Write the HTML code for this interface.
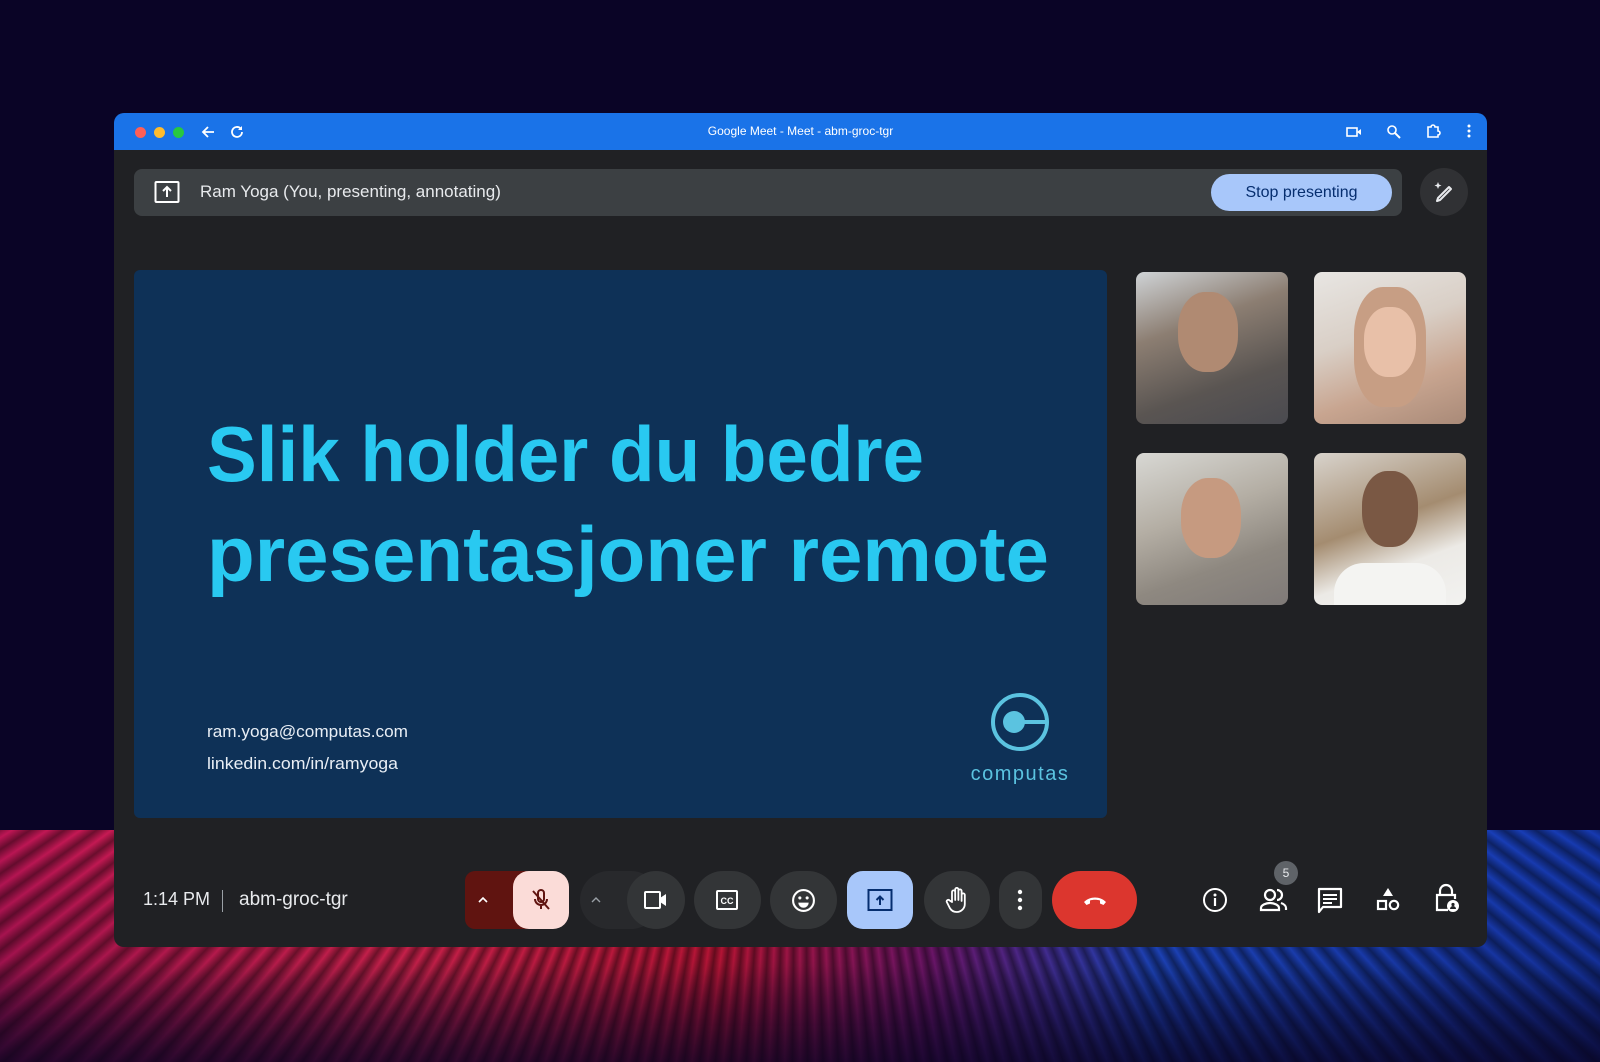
<!DOCTYPE html>
<html><head><meta charset="utf-8"><style>
*{margin:0;padding:0;box-sizing:border-box}
body{width:1600px;height:1062px;overflow:hidden;position:relative;font-family:"Liberation Sans",sans-serif;background:#0a0426}
.floor{position:absolute;left:0;top:830px;width:1600px;height:232px;
background:linear-gradient(90deg,#d0185a 0%,#ff2a55 25%,#e81a3a 45%,#8a1a7a 58%,#2255e0 72%,#1840c0 100%);
-webkit-mask:linear-gradient(180deg,rgba(0,0,0,.9),rgba(0,0,0,.75) 60%,rgba(0,0,0,.35));}
.stripes{position:absolute;left:0;top:830px;width:1600px;height:232px;
background:repeating-conic-gradient(from 90deg at 800px -500px, rgba(0,0,0,0) 0deg, rgba(0,0,0,.45) 0.6deg, rgba(0,0,0,0) 1.2deg);}
.fadeB{position:absolute;left:0;top:960px;width:1600px;height:102px;background:linear-gradient(180deg,rgba(10,4,38,0),rgba(10,4,38,.55))}
.win{position:absolute;left:114px;top:113px;width:1373px;height:834px;background:#202124;border-radius:10px;overflow:hidden}
.tb{position:absolute;left:0;top:0;width:100%;height:37px;background:#1a73e8}
.dot{position:absolute;top:14px;width:11px;height:11px;border-radius:50%}
.ttl{position:absolute;left:0;width:100%;top:11px;text-align:center;color:#fff;font-size:12px}
.pbar{position:absolute;left:20px;top:56px;width:1268px;height:47px;background:#3c4043;border-radius:8px}
.pbar .t{position:absolute;left:66px;top:13px;color:#e8eaed;font-size:17px}
.stop{position:absolute;left:1077px;top:5px;width:181px;height:37px;border-radius:19px;background:#a8c7fa;color:#062e6f;font-size:16px;text-align:center;line-height:37px}
.pen{position:absolute;left:1306px;top:55px;width:48px;height:48px;border-radius:50%;background:#303134}
.slide{position:absolute;left:20px;top:157px;width:973px;height:548px;background:#0e3157;border-radius:6px;overflow:hidden}
.tile{position:absolute;width:152px;height:152px;border-radius:8px}
.btn{position:absolute;top:758px;height:58px;border-radius:29px;background:#333537}
.ic{position:absolute}
</style></head><body>
<div class="floor"></div><div class="stripes"></div><div class="fadeB"></div>
<div class="win">
 <div class="tb">
  <div class="dot" style="left:21px;background:#ff5f57"></div>
  <div class="dot" style="left:40px;background:#febc2e"></div>
  <div class="dot" style="left:59px;background:#28c840"></div>
  <svg class="ic" style="left:86px;top:11px" width="16" height="16" viewBox="0 0 16 16"><path d="M14 8H3M8 3L3 8l5 5" stroke="#fff" stroke-width="1.8" fill="none"/></svg>
  <svg class="ic" style="left:115px;top:11px" width="16" height="16" viewBox="0 0 16 16"><path d="M13 8a5 5 0 1 1-1.5-3.6" stroke="#fff" stroke-width="1.8" fill="none"/><path d="M13 2v4h-4" fill="#fff"/></svg>
  <div class="ttl">Google Meet - Meet - abm-groc-tgr</div>
  <svg class="ic" style="left:1232px;top:11px" width="16" height="16" viewBox="0 0 16 16"><rect x="1" y="4" width="10" height="8" stroke="#fff" stroke-width="1.6" fill="none"/><path d="M11 8l4-3v6z" fill="#fff"/></svg>
  <svg class="ic" style="left:1272px;top:11px" width="16" height="16" viewBox="0 0 16 16"><circle cx="6" cy="6" r="4" stroke="#fff" stroke-width="1.6" fill="none"/><path d="M9 9l5 5" stroke="#fff" stroke-width="2"/></svg>
  <svg class="ic" style="left:1311px;top:10px" width="16" height="16" viewBox="0 0 16 16"><path d="M3 4h3a2 2 0 0 1 4 0h3v4a2 2 0 0 1 0 4v2H3z" stroke="#fff" stroke-width="1.6" fill="none"/></svg>
  <svg class="ic" style="left:1349px;top:10px" width="12" height="16" viewBox="0 0 12 16"><circle cx="6" cy="3" r="1.5" fill="#fff"/><circle cx="6" cy="8" r="1.5" fill="#fff"/><circle cx="6" cy="13" r="1.5" fill="#fff"/></svg>
 </div>
 <div class="pbar">
  <svg class="ic" style="left:20px;top:11px" width="26" height="24" viewBox="0 0 26 24"><rect x="1.5" y="2" width="23" height="20" stroke="#fff" stroke-width="2" fill="none" rx="1"/><path d="M13 17V8M9 11l4-4 4 4" stroke="#fff" stroke-width="2" fill="none"/></svg>
  <div class="t">Ram Yoga (You, presenting, annotating)</div>
  <div class="stop">Stop presenting</div>
 </div>
 <div class="pen"><svg class="ic" style="left:12px;top:12px" width="24" height="24" viewBox="0 0 24 24"><path d="M8 20l-3 1 1-3L17 7l2 2z" stroke="#e8eaed" stroke-width="2" fill="none" stroke-linejoin="round"/><path d="M6 2l1 2.5L9.5 5.5 7 6.5 6 9 5 6.5 2.5 5.5 5 4.5z" fill="#e8eaed"/></svg></div>
 <div class="slide">
  <svg width="973" height="548" style="position:absolute;left:0;top:0">
   <text x="73" y="211" textLength="717" lengthAdjust="spacingAndGlyphs" font-family="Liberation Sans" font-weight="bold" font-size="78" fill="#29c9f1">Slik holder du bedre</text>
   <text x="73" y="311" textLength="842" lengthAdjust="spacingAndGlyphs" font-family="Liberation Sans" font-weight="bold" font-size="78" fill="#29c9f1">presentasjoner remote</text>
   <text x="73" y="467" font-family="Liberation Sans" font-size="17" fill="#e8eef5" textLength="201" lengthAdjust="spacingAndGlyphs">ram.yoga@computas.com</text>
   <text x="73" y="499" font-family="Liberation Sans" font-size="17" fill="#e8eef5" textLength="191" lengthAdjust="spacingAndGlyphs">linkedin.com/in/ramyoga</text>
   <circle cx="886" cy="452" r="27" stroke="#5bc3e0" stroke-width="4" fill="none"/>
   <circle cx="880" cy="452" r="11" fill="#5bc3e0"/>
   <path d="M886 452h27" stroke="#5bc3e0" stroke-width="4"/>
   <text x="886" y="510" text-anchor="middle" font-family="Liberation Sans" font-size="20" fill="#5bc3e0" letter-spacing="1.5">computas</text>
  </svg>
 </div>
 <div class="tile" style="left:1022px;top:159px;background:linear-gradient(160deg,#cfd3d6 0%,#8c7e72 35%,#5a5552 70%,#4a4a50 100%)"><div style="position:absolute;left:42px;top:20px;width:60px;height:80px;border-radius:45%;background:#b08a72"></div></div>
 <div class="tile" style="left:1200px;top:159px;background:linear-gradient(160deg,#e8e6e3 0%,#d9cfc6 40%,#c8a590 70%,#a98a78 100%)"><div style="position:absolute;left:40px;top:15px;width:72px;height:120px;border-radius:40%;background:#c79e84"></div><div style="position:absolute;left:50px;top:35px;width:52px;height:70px;border-radius:45%;background:#e8c0a8"></div></div>
 <div class="tile" style="left:1022px;top:340px;background:linear-gradient(160deg,#d8d8d4 0%,#b4aea4 40%,#8e8880 70%,#7f7a78 100%)"><div style="position:absolute;left:45px;top:25px;width:60px;height:80px;border-radius:45%;background:#c69a80"></div></div>
 <div class="tile" style="left:1200px;top:340px;background:linear-gradient(160deg,#d8d3cc 0%,#a48c70 45%,#eceae6 70%,#f2f2f0 100%)"><div style="position:absolute;left:48px;top:18px;width:56px;height:76px;border-radius:45%;background:#7a5844"></div><div style="position:absolute;left:20px;top:110px;width:112px;height:42px;border-radius:30px 30px 0 0;background:#f4f4f2"></div></div>

 <div style="position:absolute;left:29px;top:776px;color:#e8eaed;font-size:18px">1:14 PM</div>
 <div style="position:absolute;left:108px;top:777px;width:1px;height:22px;background:#9aa0a6"></div>
 <div style="position:absolute;left:125px;top:776px;color:#e8eaed;font-size:19px">abm-groc-tgr</div>

 <div class="btn" style="left:351px;width:70px;background:#601410;border-radius:10px 0 0 10px"></div>
 <div class="btn" style="left:399px;width:56px;background:#fbdcd8;border-radius:16px"></div>
 <svg class="ic" style="left:363px;top:781px" width="12" height="12" viewBox="0 0 12 12"><path d="M2 8l4-4 4 4" stroke="#fff" stroke-width="1.6" fill="none"/></svg>
 <svg class="ic" style="left:415px;top:775px" width="24" height="24" viewBox="0 0 24 24"><path d="M9 5a3 3 0 0 1 6 0v6a3 3 0 0 1-6 0zM6 11a6 6 0 0 0 12 0M12 17v4M4 3l16 18" stroke="#601410" stroke-width="2" fill="none"/></svg>

 <div class="btn" style="left:466px;width:80px;background:#28292c"></div>
 <div class="btn" style="left:513px;width:58px"></div>
 <svg class="ic" style="left:476px;top:781px" width="12" height="12" viewBox="0 0 12 12"><path d="M2 8l4-4 4 4" stroke="#9aa0a6" stroke-width="1.4" fill="none"/></svg>
 <svg class="ic" style="left:529px;top:775px" width="26" height="24" viewBox="0 0 26 24"><rect x="2" y="4" width="15" height="16" stroke="#fff" stroke-width="2" fill="none" rx="1"/><path d="M17 10l6-4v12l-6-4z" fill="#fff"/></svg>

 <div class="btn" style="left:580px;width:67px"></div>
 <svg class="ic" style="left:601px;top:775px" width="24" height="24" viewBox="0 0 24 24"><rect x="2" y="3" width="20" height="18" stroke="#fff" stroke-width="2" fill="none" rx="1"/><text x="12" y="16" text-anchor="middle" font-size="9" font-weight="bold" fill="#fff" font-family="Liberation Sans">CC</text></svg>
 <div class="btn" style="left:656px;width:67px"></div>
 <svg class="ic" style="left:677px;top:775px" width="25" height="25" viewBox="0 0 24 24"><circle cx="12" cy="12" r="10" stroke="#fff" stroke-width="2" fill="none"/><circle cx="8.5" cy="9.5" r="1.5" fill="#fff"/><circle cx="15.5" cy="9.5" r="1.5" fill="#fff"/><path d="M7 14h10a5 5 0 0 1-10 0z" fill="#fff"/></svg>
 <div class="btn" style="left:733px;width:66px;background:#a8c7fa;border-radius:16px"></div>
 <svg class="ic" style="left:753px;top:775px" width="26" height="24" viewBox="0 0 26 24"><rect x="1.5" y="2" width="23" height="20" stroke="#062e6f" stroke-width="2" fill="none"/><path d="M13 17V9M9.5 12l3.5-3.5 3.5 3.5" stroke="#062e6f" stroke-width="2" fill="none"/></svg>
 <div class="btn" style="left:810px;width:66px"></div>
 <svg class="ic" style="left:830px;top:773px" width="26" height="28" viewBox="0 0 26 28"><path d="M8 16V6a1.6 1.6 0 0 1 3.2 0v8V3.5a1.6 1.6 0 0 1 3.2 0V14V5a1.6 1.6 0 0 1 3.2 0v10V9a1.6 1.6 0 0 1 3.2 0v9a8 8 0 0 1-8 8 8 8 0 0 1-7-4l-3-6a1.6 1.6 0 0 1 2.8-1.5z" stroke="#fff" stroke-width="1.8" fill="none" stroke-linejoin="round"/></svg>
 <div class="btn" style="left:885px;width:43px"></div>
 <svg class="ic" style="left:900px;top:775px" width="12" height="24" viewBox="0 0 12 24"><circle cx="6" cy="4" r="2.2" fill="#fff"/><circle cx="6" cy="12" r="2.2" fill="#fff"/><circle cx="6" cy="20" r="2.2" fill="#fff"/></svg>
 <div class="btn" style="left:938px;width:85px;background:#dc362e"></div>
 <svg class="ic" style="left:967px;top:778px" width="28" height="18" viewBox="0 0 28 18"><path d="M3 11c6-6 16-6 22 0l-2.5 3-3.5-1.5v-3c-3-1-7-1-10 0v3L5.5 14z" fill="#fff"/></svg>

 <svg class="ic" style="left:1088px;top:774px" width="26" height="26" viewBox="0 0 26 26"><circle cx="13" cy="13" r="11" stroke="#fff" stroke-width="2" fill="none"/><circle cx="13" cy="8" r="1.5" fill="#fff"/><path d="M13 11v8" stroke="#fff" stroke-width="2.2"/></svg>
 <div style="position:absolute;left:1160px;top:748px;width:24px;height:24px;border-radius:50%;background:#5f6368;color:#e8eaed;font-size:12px;text-align:center;line-height:24px">5</div>
 <svg class="ic" style="left:1145px;top:774px" width="30" height="26" viewBox="0 0 30 26"><circle cx="11" cy="8" r="5" stroke="#fff" stroke-width="2.2" fill="none"/><path d="M2 23v-2c0-3 5-5 9-5s9 2 9 5v2z" stroke="#fff" stroke-width="2.2" fill="none"/><path d="M18 3a5 5 0 0 1 0 10M22 16c3 1 5 3 5 5v2" stroke="#fff" stroke-width="2.2" fill="none"/></svg>
 <svg class="ic" style="left:1203px;top:774px" width="26" height="28" viewBox="0 0 26 28"><path d="M2 2h22v18H6l-4 5z" stroke="#fff" stroke-width="2.2" fill="none" stroke-linejoin="round"/><path d="M6 8h14M6 12h14M6 16h9" stroke="#fff" stroke-width="2"/></svg>
 <svg class="ic" style="left:1261px;top:773px" width="26" height="28" viewBox="0 0 26 28"><path d="M13 2l5 8H8z" fill="#fff"/><rect x="3" y="15" width="8" height="8" stroke="#fff" stroke-width="2.2" fill="none"/><circle cx="19" cy="19" r="4.2" stroke="#fff" stroke-width="2.2" fill="none"/></svg>
 <svg class="ic" style="left:1320px;top:770px" width="26" height="32" viewBox="0 0 26 32"><path d="M6 12V8a6 6 0 0 1 12 0v4" stroke="#fff" stroke-width="2.2" fill="none"/><path d="M14 27H3V12h18v4" stroke="#fff" stroke-width="2.2" fill="none"/><circle cx="19" cy="23" r="6" fill="#fff"/><circle cx="19" cy="21.5" r="1.6" fill="#202124"/><path d="M16 26a3 3 0 0 1 6 0z" fill="#202124"/></svg>
</div>
</body></html>
